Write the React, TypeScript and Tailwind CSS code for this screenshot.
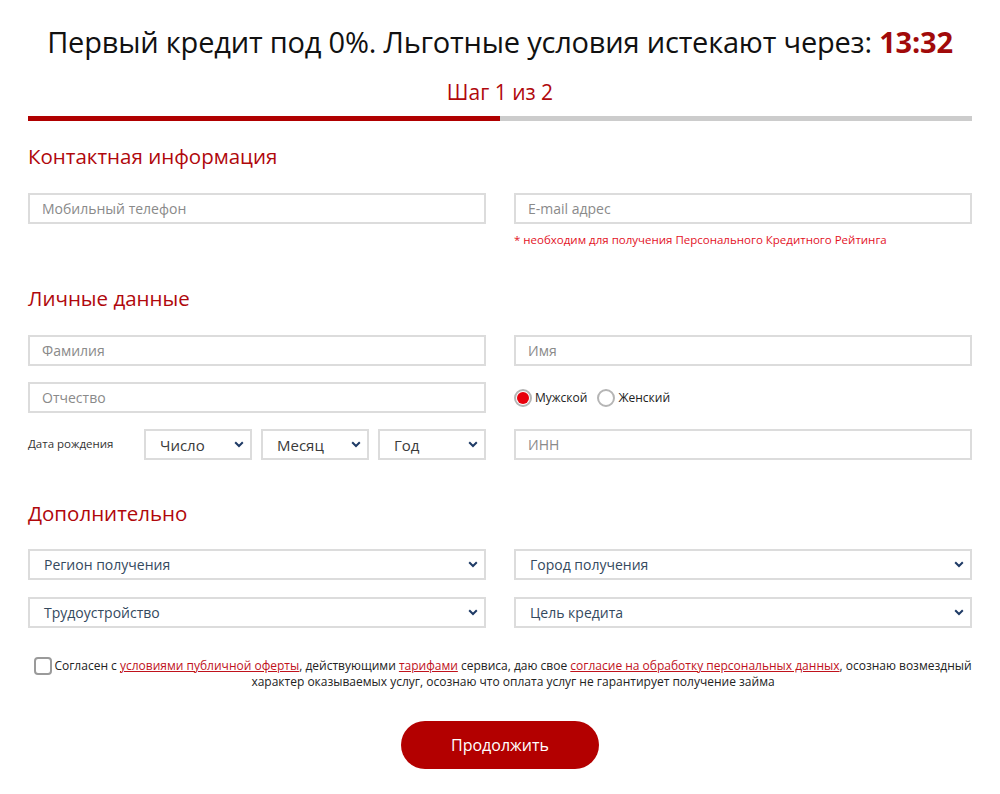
import React from "react";

const Chevron: React.FC = () => (
  <svg width="10" height="7" viewBox="0 0 10 7" className="shrink-0">
    <path d="M1.2 1.3 L5 5 L8.8 1.3" fill="none" stroke="#1f3b66" strokeWidth="2" />
  </svg>
);

const TextField: React.FC<{ placeholder: string }> = ({ placeholder }) => (
  <div className="h-[31px] border-2 border-[#dcdcdc] bg-white flex items-center px-[12px] text-[14px] text-[#8a8a8a]">
    {placeholder}
  </div>
);

const SelectField: React.FC<{ label: string }> = ({ label }) => (
  <div className="h-[31px] border-2 border-[#dcdcdc] bg-white flex items-center justify-between pl-[14px] pr-[6px] text-[14px] text-[#34495e]">
    <span>{label}</span>
    <Chevron />
  </div>
);

const SmallSelect: React.FC<{ label: string }> = ({ label }) => (
  <div className="flex-1 h-[31px] border-2 border-[#dcdcdc] bg-white flex items-center justify-between pl-[14px] pr-[6px] text-[15px] text-[#3a3a3a]">
    <span>{label}</span>
    <Chevron />
  </div>
);

const SectionTitle: React.FC<{ children: React.ReactNode }> = ({ children }) => (
  <h2 className="text-[20.5px] text-[#b0080c] leading-none">{children}</h2>
);

export default function App() {
  return (
    <div className="w-[1000px] min-h-[794px] bg-white font-['Open_Sans',sans-serif] text-[#222]">
      {/* Header */}
      <div className="pt-[23px] text-center">
        <h1 className="text-[29px] leading-[38px] text-[#111] tracking-[-0.2px]">
          Первый кредит под 0%. Льготные условия истекают через:{" "}
          <span className="font-bold text-[#a10a0a]">13:32</span>
        </h1>
        <div className="mt-[18px] text-[21px] leading-[26px] text-[#b0080c]">Шаг 1 из 2</div>
      </div>

      <div className="px-[28px]">
        {/* Progress */}
        <div className="mt-[11px] flex h-[5px]">
          <div className="w-[472px] bg-[#b00000]" />
          <div className="flex-1 bg-[#cccccc]" />
        </div>

        {/* Contact info */}
        <div className="mt-[25px]">
          <SectionTitle>Контактная информация</SectionTitle>
        </div>
        <div className="mt-[26px] grid grid-cols-2 gap-x-[28px]">
          <TextField placeholder="Мобильный телефон" />
          <div>
            <TextField placeholder="E-mail адрес" />
            <div className="mt-[7px] text-[11.5px] text-[#e3121f]">
              * необходим для получения Персонального Кредитного Рейтинга
            </div>
          </div>
        </div>

        {/* Personal */}
        <div className="mt-[40px]">
          <SectionTitle>Личные данные</SectionTitle>
        </div>
        <div className="mt-[27px] grid grid-cols-2 gap-x-[28px] gap-y-[16px]">
          <TextField placeholder="Фамилия" />
          <TextField placeholder="Имя" />
          <TextField placeholder="Отчество" />
          <div className="flex items-center gap-[10px] text-[12px] text-[#222]">
            <label className="flex items-center gap-[3px]">
              <span className="w-[18px] h-[18px] rounded-full border-2 border-[#b5b5b5] flex items-center justify-center">
                <span className="w-[12px] h-[12px] rounded-full bg-[#e8000c]" />
              </span>
              Мужской
            </label>
            <label className="flex items-center gap-[3px]">
              <span className="w-[18px] h-[18px] rounded-full border-2 border-[#b5b5b5]" />
              Женский
            </label>
          </div>
          <div className="flex items-center">
            <span className="w-[116px] text-[11.5px] text-[#333] -mt-[2px]">Дата рождения</span>
            <div className="flex-1 flex gap-[9px]">
              <SmallSelect label="Число" />
              <SmallSelect label="Месяц" />
              <SmallSelect label="Год" />
            </div>
          </div>
          <TextField placeholder="ИНН" />
        </div>

        {/* Additional */}
        <div className="mt-[43px]">
          <SectionTitle>Дополнительно</SectionTitle>
        </div>
        <div className="mt-[25px] grid grid-cols-2 gap-x-[28px] gap-y-[17px]">
          <SelectField label="Регион получения" />
          <SelectField label="Город получения" />
          <SelectField label="Трудоустройство" />
          <SelectField label="Цель кредита" />
        </div>

        {/* Agreement */}
        <div className="mt-[29px] flex items-start pl-[6px]">
          <span className="w-[18px] h-[18px] rounded-[4px] border-2 border-[#9a9a9a] shrink-0" />
          <p className="mt-[1px] flex-1 text-center text-[12px] leading-[16px] text-[#222] pl-[2px]">
            Согласен с{" "}
            <a className="text-[#c0121c] underline">условиями публичной оферты</a>, действующими{" "}
            <a className="text-[#c0121c] underline">тарифами</a> сервиса, даю свое{" "}
            <a className="text-[#c0121c] underline">согласие на обработку персональных данных</a>, осознаю
            возмездный характер оказываемых услуг, осознаю что оплата услуг не гарантирует получение займа
          </p>
        </div>

        {/* Submit */}
        <div className="mt-[31px] flex justify-center">
          <button className="w-[198px] h-[48px] rounded-full bg-[#b30000] text-white text-[16px]">
            Продолжить
          </button>
        </div>
      </div>
    </div>
  );
}
